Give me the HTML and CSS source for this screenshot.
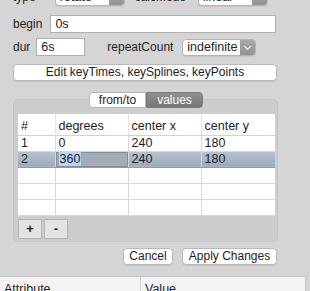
FILE: index.html
```html
<!DOCTYPE html>
<html lang="en">
<head>
    <meta charset="UTF-8">
    <title>Animate Transform</title>
    <link rel="stylesheet" href="styles.css">
</head>
<body>
    <div class="panel">
        <div class="row row-type">
            <span class="label">type</span>
            <div class="popup w-type"><span class="popup-value">rotate</span><span class="popup-arrow"></span></div>
            <span class="label label-calc">calcMode</span>
            <div class="popup w-calc"><span class="popup-value">linear</span><span class="popup-arrow"></span></div>
        </div>

        <div class="row row-begin">
            <span class="label">begin</span>
            <div class="field w-begin">0s</div>
        </div>

        <div class="row row-dur">
            <span class="label">dur</span>
            <div class="field w-dur">6s</div>
            <span class="label label-repeat">repeatCount</span>
            <div class="popup w-repeat"><span class="popup-value">indefinite</span><span class="popup-arrow"></span></div>
        </div>

        <button class="btn btn-edit">Edit keyTimes, keySplines, keyPoints</button>

        <div class="segmented">
            <span class="seg">from/to</span>
            <span class="seg seg-on">values</span>
        </div>

        <div class="group">
            <table class="grid">
                <thead>
                    <tr><th class="c-num">#</th><th class="c-val">degrees</th><th class="c-val">center x</th><th>center y</th></tr>
                </thead>
                <tbody>
                    <tr><td>1</td><td>0</td><td>240</td><td>180</td></tr>
                    <tr class="selected"><td>2</td><td class="editing"><span class="sel-text">360</span></td><td>240</td><td>180</td></tr>
                    <tr><td></td><td></td><td></td><td></td></tr>
                    <tr><td></td><td></td><td></td><td></td></tr>
                    <tr><td></td><td></td><td></td><td></td></tr>
                </tbody>
            </table>
            <div class="row-tools">
                <button class="tool">+</button>
                <button class="tool">-</button>
            </div>
        </div>

        <div class="actions">
            <button class="btn btn-cancel">Cancel</button>
            <button class="btn btn-apply">Apply Changes</button>
        </div>
    </div>

    <div class="attr-table">
        <div class="attr-head attr-name">Attribute</div>
        <div class="attr-head attr-value">Value</div>
    </div>
</body>
</html>
```

FILE: styles.css
```css
* {
    margin: 0;
    padding: 0;
    box-sizing: border-box;
}

body {
    width: 310px;
    height: 291px;
    overflow: hidden;
    background: #d5d5d5;
    font-family: 'Liberation Sans', Arial, sans-serif;
    font-size: 12px;
    color: #1e1e1e;
}

.panel {
    width: 278px;
    padding-left: 13px;
}

.row {
    display: flex;
    align-items: center;
    height: 18px;
}

.row-type {
    margin-top: -12px;
}

.row-begin {
    margin-top: 9px;
}

.row-dur {
    margin-top: 5px;
}

.label {
    white-space: nowrap;
}

.label-calc {
    margin-left: 10px;
    width: 63px;
}

.label-repeat {
    margin-left: 22px;
    width: 75px;
}

/* popup buttons */
.popup {
    display: flex;
    height: 17px;
    background: #fff;
    border: 1px solid #b4b4b4;
    border-radius: 4px;
    overflow: hidden;
    box-shadow: 0 1px 0 rgba(0,0,0,0.06);
}

.popup-value {
    flex: 1;
    padding-left: 4px;
    line-height: 15px;
    font-size: 12.5px;
}

.popup-arrow {
    width: 15px;
    background: linear-gradient(#a9a9a9, #939393);
    position: relative;
}

.popup-arrow::after {
    content: '';
    position: absolute;
    left: 5px;
    top: 4px;
    width: 4px;
    height: 4px;
    border-right: 1.5px solid #fff;
    border-bottom: 1.5px solid #fff;
    transform: rotate(45deg);
}

.w-type {
    width: 70px;
    margin-left: 19px;
}

.w-calc {
    width: 70px;
}

.w-repeat {
    width: 74px;
}

/* text fields */
.field {
    height: 18px;
    background: #fff;
    border: 1px solid #b0b0b0;
    padding-left: 4px;
    line-height: 16px;
    font-size: 12.5px;
}

.w-begin {
    width: 226px;
    margin-left: 8px;
}

.w-dur {
    width: 49px;
    margin-left: 6px;
}

/* push buttons */
.btn {
    display: block;
    height: 17px;
    background: #fff;
    border: 1px solid #b9b9b9;
    border-radius: 4px;
    font-family: inherit;
    font-size: 12px;
    color: #1e1e1e;
    line-height: 15px;
    box-shadow: 0 1px 0 rgba(0,0,0,0.08);
}

.btn-edit {
    width: 264px;
    margin-top: 8px;
}

.segmented {
    position: relative;
    z-index: 1;
    display: flex;
    width: 114px;
    height: 16px;
    margin: 11px 0 -9px 76px;
}

.seg {
    flex: 1;
    text-align: center;
    line-height: 14px;
    background: #fff;
    border: 1px solid #b6b6b6;
    border-radius: 4px 0 0 4px;
}

.seg-on {
    background: linear-gradient(#8f8f8f, #767676);
    border-color: #7a7a7a;
    color: #fff;
    border-radius: 0 4px 4px 0;
}

/* group box with table */
.group {
    width: 265px;
    height: 143px;
    padding: 14px 4px 5px 4px;
    background: #cdcdcd;
    border: 1px solid #c4c4c4;
    border-radius: 5px;
}

.grid {
    width: 257px;
    border-collapse: collapse;
    background: #fff;
    table-layout: fixed;
}

.grid th,
.grid td {
    height: 16px;
    padding: 0 0 0 3px;
    text-align: left;
    font-weight: normal;
    font-size: 12.5px;
    border-right: 1px solid #d9d9d9;
    border-bottom: 1px solid #d9d9d9;
    white-space: nowrap;
}

.grid th {
    height: 21px;
    padding-top: 3px;
    border-right-color: #e4e4e4;
    border-bottom-color: #d2d2d2;
}

.grid th:last-child,
.grid td:last-child {
    border-right: none;
}

.c-num {
    width: 37px;
}

.c-val {
    width: 73px;
}

.selected td {
    background: linear-gradient(#b5c1ce, #9dacbb);
    border-bottom-color: #8e9aa7;
}

.selected td.editing {
    background: #a3adb8;
    box-shadow: inset 0 0 0 1px #868f99;
}

.sel-text {
    background: #b4d4fb;
    padding: 0 1px;
}

.row-tools {
    display: flex;
    gap: 2px;
    margin-top: 3px;
}

.tool {
    width: 24px;
    height: 20px;
    background: #e3e3e3;
    border: 1px solid #b3b3b3;
    font-family: inherit;
    font-size: 13px;
    font-weight: bold;
    color: #222;
}

.actions {
    display: flex;
    justify-content: flex-end;
    gap: 9px;
    width: 264px;
    margin-top: 6px;
}

.btn-cancel {
    width: 50px;
}

.btn-apply {
    width: 95px;
}

/* attribute list at the bottom */
.attr-table {
    display: flex;
    width: 306px;
    height: 20px;
    margin-top: 11px;
    background: #f3f3f3;
    border-top: 1px solid #c6c6c6;
    border-right: 1px solid #c6c6c6;
    font-size: 12.5px;
}

.attr-head {
    padding: 5px 0 0 4px;
}

.attr-name {
    width: 141px;
    border-right: 1px solid #d0d0d0;
}
```
